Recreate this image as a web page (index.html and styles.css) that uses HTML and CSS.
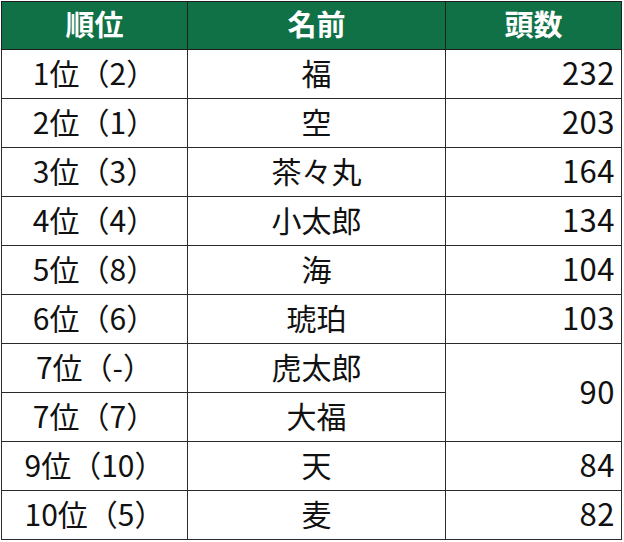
FILE: index.html
```html
<!DOCTYPE html>
<html lang="ja">
<head>
<meta charset="utf-8">
<link rel="stylesheet" href="styles.css">
</head>
<body>
<table class="rank">
  <colgroup>
    <col class="c-rank">
    <col class="c-name">
    <col class="c-count">
  </colgroup>
  <thead>
    <tr><th>順位</th><th>名前</th><th>頭数</th></tr>
  </thead>
  <tbody>
    <tr><td class="pos">1位（2）</td><td class="name">福</td><td class="num">232</td></tr>
    <tr><td class="pos">2位（1）</td><td class="name">空</td><td class="num">203</td></tr>
    <tr><td class="pos">3位（3）</td><td class="name">茶々丸</td><td class="num">164</td></tr>
    <tr><td class="pos">4位（4）</td><td class="name">小太郎</td><td class="num">134</td></tr>
    <tr><td class="pos">5位（8）</td><td class="name">海</td><td class="num">104</td></tr>
    <tr><td class="pos">6位（6）</td><td class="name">琥珀</td><td class="num">103</td></tr>
    <tr><td class="pos">7位（-）</td><td class="name">虎太郎</td><td class="num" rowspan="2">90</td></tr>
    <tr><td class="pos">7位（7）</td><td class="name">大福</td></tr>
    <tr><td class="pos">9位（10）</td><td class="name">天</td><td class="num">84</td></tr>
    <tr><td class="pos">10位（5）</td><td class="name">麦</td><td class="num">82</td></tr>
  </tbody>
</table>
</body>
</html>
```
FILE: styles.css
```css
html, body {
  margin: 0;
  padding: 0;
  background: #ffffff;
}
body {
  padding: 1px 0 0 1px;
  font-family: "Noto Sans CJK JP", "Noto Sans", sans-serif;
}
.rank {
  border-collapse: collapse;
  table-layout: fixed;
  width: 620px;
}
.c-rank { width: 186px; }
.c-name { width: 258px; }
.c-count { width: 176px; }
.rank th,
.rank td {
  border: 1px solid #2b2b2b;
  padding: 0 0 5px 0;
  line-height: 1;
  box-sizing: border-box;
}
.rank th {
  background: #107147;
  color: #ffffff;
  font-weight: bold;
  font-size: 29px;
  height: 48px;
  text-align: center;
  border-color: #1f1f1f;
}
.rank td {
  height: 49px;
  font-size: 30px;
  color: #111111;
}
.pos { text-align: center; }
.name { text-align: center; }
.rank .num {
  text-align: right;
  padding-right: 6px;
  font-size: 31px;
  letter-spacing: 0.5px;
}
```
